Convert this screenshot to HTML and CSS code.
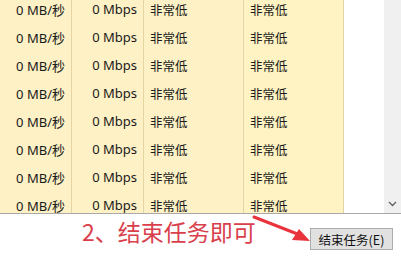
FILE: index.html
```html
<!DOCTYPE html>
<html lang="zh-CN">
<head>
    <meta charset="UTF-8">
    <title>任务管理器</title>
    <link rel="stylesheet" href="styles.css">
</head>
<body>
<div class="panel">
    <div class="list">
        <div class="rows">
            <div class="row"><span class="c1">0 MB/秒</span><span class="c2">0 Mbps</span><span class="c3">非常低</span><span class="c4">非常低</span></div>
            <div class="row"><span class="c1">0 MB/秒</span><span class="c2">0 Mbps</span><span class="c3">非常低</span><span class="c4">非常低</span></div>
            <div class="row"><span class="c1">0 MB/秒</span><span class="c2">0 Mbps</span><span class="c3">非常低</span><span class="c4">非常低</span></div>
            <div class="row"><span class="c1">0 MB/秒</span><span class="c2">0 Mbps</span><span class="c3">非常低</span><span class="c4">非常低</span></div>
            <div class="row"><span class="c1">0 MB/秒</span><span class="c2">0 Mbps</span><span class="c3">非常低</span><span class="c4">非常低</span></div>
            <div class="row"><span class="c1">0 MB/秒</span><span class="c2">0 Mbps</span><span class="c3">非常低</span><span class="c4">非常低</span></div>
            <div class="row"><span class="c1">0 MB/秒</span><span class="c2">0 Mbps</span><span class="c3">非常低</span><span class="c4">非常低</span></div>
            <div class="row"><span class="c1">0 MB/秒</span><span class="c2">0 Mbps</span><span class="c3">非常低</span><span class="c4">非常低</span></div>
        </div>
        <div class="scrollbar">
            <svg class="down" width="9" height="6" viewBox="0 0 9 6"><path d="M1 1 L4.5 4.5 L8 1" fill="none" stroke="#606060" stroke-width="1.3"/></svg>
        </div>
    </div>
    <div class="footer">
        <span class="note">2、结束任务即可</span>
        <button class="end">结束任务(E)</button>
        <!-- 标注箭头 -->
        <svg class="arrow" width="70" height="34" viewBox="0 0 70 34">
            <path d="M2 3 Q 25 12 48 21" fill="none" stroke="#e8323c" stroke-width="3" stroke-linecap="round"/>
            <polygon points="58,27 40,26 47,15" fill="#e8323c"/>
        </svg>
    </div>
</div>
</body>
</html>
```

FILE: styles.css
```css
body {
    margin: 0;
    background: #fff;
    font-family: "Noto Sans", "Noto Sans CJK SC", sans-serif;
}
.panel {
    width: 401px;
    height: 264px;
    position: relative;
}
.list {
    display: flex;
    height: 213px;
    border-bottom: 1px solid #a9a9a9;
    overflow: hidden;
}
.rows {
    flex: 1;
    margin-top: -5px;
}
.row {
    display: grid;
    grid-template-columns: 72px 72px 100px 100px 1fr;
    height: 28px;
    font-size: 13px;
    color: #1a1a1a;
}
.row span {
    display: flex;
    align-items: center;
    background: #fdf1c5;
    border-right: 1px solid #e4d6a4;
    padding: 0 6px;
}
.c1, .c2 {
    justify-content: flex-end;
}
.c3, .c4 {
    font-family: "Noto Sans CJK SC", sans-serif;
    font-size: 12.5px;
}
.c4 {
    background: #fff3c3 !important;
}
.scrollbar {
    width: 17px;
    background: #f0f0f0;
    display: flex;
    flex-direction: column;
    justify-content: flex-end;
    align-items: center;
    padding-bottom: 6px;
    box-sizing: border-box;
}
.footer {
    display: flex;
    align-items: flex-start;
    height: 50px;
    padding-left: 82px;
}
.note {
    font-family: "Noto Sans CJK SC", sans-serif;
    font-size: 23px;
    line-height: 32px;
    color: #d9404c;
    margin-top: 1px;
}
.end {
    margin-left: auto;
    margin-right: 8px;
    margin-top: 14px;
    width: 83px;
    height: 22px;
    padding: 0;
    font-family: "Noto Sans CJK SC", sans-serif;
    font-size: 12.5px;
    color: #111;
    background: #e1e1e1;
    border: 1px solid #adadad;
    border-radius: 0;
}
.arrow {
    position: absolute;
    left: 252px;
    top: 214px;
}
```
